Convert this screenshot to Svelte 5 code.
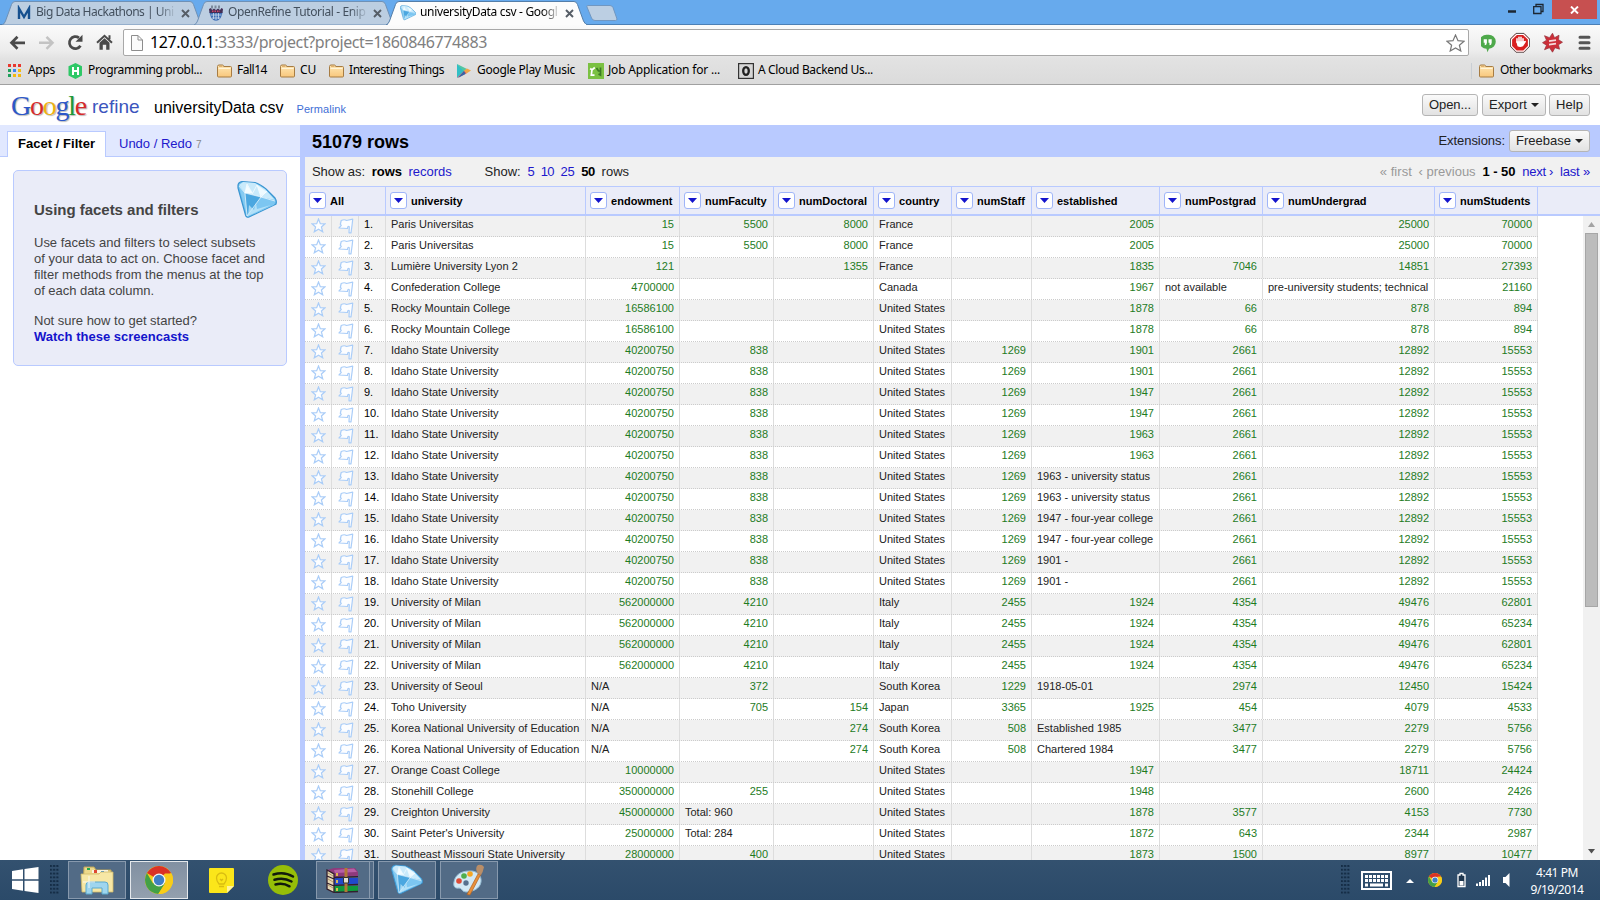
<script>
  // Spreads the letters of a label so that it takes exactly `width` pixels.
  function fit(node, width) {
    const natural = node.getBoundingClientRect().width;
    const count = node.textContent.length;
    if (width && count) node.style.letterSpacing = `${(width - natural) / count}px`;
  }

  const tabs = [
    { title: 'Big Data Hackathons | Uni', icon: 'm', active: false },
    { title: 'OpenRefine Tutorial - Enip', icon: 'crest', active: false },
    { title: 'universityData csv - Googl', icon: 'gem', active: true }
  ];

  const bookmarks = [
    { icon: 'apps', label: 'Apps', w: 27, slot: 60 },
    { icon: 'hr', label: 'Programming probl...', w: 114, slot: 149 },
    { icon: 'folder', label: 'Fall14', w: 30, slot: 63 },
    { icon: 'folder', label: 'CU', w: 16, slot: 49 },
    { icon: 'folder', label: 'Interesting Things', w: 95, slot: 128 },
    { icon: 'play', label: 'Google Play Music', w: 98, slot: 131 },
    { icon: 'job', label: 'Job Application for ...', w: 112, slot: 150 },
    { icon: 'cloud', label: 'A Cloud Backend Us...', w: 115, slot: 150 }
  ];

  const columns = [
    { name: 'All', w: 81, lw: 14 },
    { name: 'university', w: 200, lw: 51.5 },
    { name: 'endowment', w: 94, lw: 61.5 },
    { name: 'numFaculty', w: 94, lw: 61.5 },
    { name: 'numDoctoral', w: 100, lw: 68 },
    { name: 'country', w: 78, lw: 40.5 },
    { name: 'numStaff', w: 80, lw: 48 },
    { name: 'established', w: 128, lw: 60.5 },
    { name: 'numPostgrad', w: 103, lw: 71 },
    { name: 'numUndergrad', w: 172, lw: 78.5 },
    { name: 'numStudents', w: 103, lw: 70.5 }
  ];

  const US = 'United States';
  const idaho = (est) => ['Idaho State University', '40200750', '838', '', US, '1269', est, '2661', '12892', '15553'];
  const milan = (n) => ['University of Milan', '562000000', '4210', '', 'Italy', '2455', '1924', '4354', '49476', n];
  const rows = [
    ['Paris Universitas', '15', '5500', '8000', 'France', '', '2005', '', '25000', '70000'],
    ['Paris Universitas', '15', '5500', '8000', 'France', '', '2005', '', '25000', '70000'],
    ['Lumière University Lyon 2', '121', '', '1355', 'France', '', '1835', '7046', '14851', '27393'],
    ['Confederation College', '4700000', '', '', 'Canada', '', '1967', 'not available', 'pre-university students; technical', '21160'],
    ['Rocky Mountain College', '16586100', '', '', US, '', '1878', '66', '878', '894'],
    ['Rocky Mountain College', '16586100', '', '', US, '', '1878', '66', '878', '894'],
    idaho('1901'),
    idaho('1901'),
    idaho('1947'),
    idaho('1947'),
    idaho('1963'),
    idaho('1963'),
    idaho('1963 - university status'),
    idaho('1963 - university status'),
    idaho('1947 - four-year college'),
    idaho('1947 - four-year college'),
    idaho('1901 -'),
    idaho('1901 -'),
    milan('62801'),
    milan('65234'),
    milan('62801'),
    milan('65234'),
    ['University of Seoul', 'N/A', '372', '', 'South Korea', '1229', '1918-05-01', '2974', '12450', '15424'],
    ['Toho University', 'N/A', '705', '154', 'Japan', '3365', '1925', '454', '4079', '4533'],
    ['Korea National University of Education', 'N/A', '', '274', 'South Korea', '508', 'Established 1985', '3477', '2279', '5756'],
    ['Korea National University of Education', 'N/A', '', '274', 'South Korea', '508', 'Chartered 1984', '3477', '2279', '5756'],
    ['Orange Coast College', '10000000', '', '', US, '', '1947', '', '18711', '24424'],
    ['Stonehill College', '350000000', '255', '', US, '', '1948', '', '2600', '2426'],
    ['Creighton University', '450000000', 'Total: 960', '', US, '', '1878', '3577', '4153', '7730'],
    ["Saint Peter's University", '25000000', 'Total: 284', '', US, '', '1872', '643', '2344', '2987'],
    ['Southeast Missouri State University', '28000000', '400', '', US, '', '1873', '1500', '8977', '10477']
  ];
  const isNumber = (v) => /^\d+$/.test(v);
  const keys = [5, 9, 13, 17, 21, 25];
</script>

{#snippet gem(size)}
  <svg width={size} height={size} viewBox="0 0 40 40">
    <path d="M1 5Q1.500 2 5 1.500L18 2.500Q23 4 29 9L38 18Q40 21 39 24L12 37Q9.500 38 8.500 35L1 8Z" fill="#6fc0ee" stroke="#3a94d0" stroke-width="1.200" />
    <path d="M2 5L6 2L18 3L28 9L38 20L24 17L8 13Z" fill="#c9eafb" />
    <path d="M8 13L10 5L15.500 13.500Z" fill="#f4fcff" />
    <path d="M24 16L20 5L30 12Z" fill="#eefaff" />
    <path d="M2 6L8 13L10 36Z" fill="#86cbf2" />
    <path d="M8 13L24 17L10 36Z" fill="#4ba7e0" />
    <path d="M24 17L38.500 21L37 25L10 37Z" fill="#7cc6f1" />
    <path d="M8 13L10 4L15.500 13.500L20 5L24 17L30 11M2 6L8 13L10 36M8 13L24 17L10 36M24 17L38 21" fill="none" stroke="#fff" stroke-opacity=".75" stroke-width=".9" />
    <path d="M11 36L12 25L17 30L19 23L20 29L34 25Z" fill="#c9ebfb" fill-opacity=".7" />
  </svg>
{/snippet}

{#snippet chrome(size)}
  <svg width={size} height={size} viewBox="0 0 28 28">
    <circle cx="14" cy="14" r="14" fill="#f8cd18" />
    <path d="M14 14L1.900 7A14 14 0 0 1 26.100 7L14 7.500Z" fill="#da3226" />
    <path d="M26.100 7H14V14Z" fill="#da3226" />
    <path d="M1.900 7A14 14 0 0 0 13.300 28L20 17.500L14 14L8 17.500Z" fill="#43a046" />
    <path d="M13.300 28L20 17.500L14 14L20 7.500H26.300A14 14 0 0 1 13.300 28Z" fill="#f8cd18" />
    <circle cx="14" cy="14" r="6.500" fill="#f5f5f5" />
    <circle cx="14" cy="14" r="5.200" fill="#3f7fc5" />
  </svg>
{/snippet}

{#snippet folder()}
  <svg width="16" height="16" viewBox="0 0 16 16">
    <defs><linearGradient id="fold" x1="0" y1="0" x2="0" y2="1"><stop offset="0" stop-color="#fee7b4" /><stop offset="1" stop-color="#f8c77c" /></linearGradient></defs>
    <path d="M.5 13V3.500Q.5 2 2 2H5.500Q6.500 2 6.700 3.500H13.500Q14.500 3.500 14.500 4.500V13Q14.500 14 13.500 14H1.500Q.5 14 .5 13Z" fill="url(#fold)" stroke="#a77c43" />
    <path d="M1.500 5.500H13.500" stroke="#fff4d8" />
    <path d="M2 3.200H5.500" stroke="#d39d56" />
  </svg>
{/snippet}

{#snippet icon(kind)}
  {#if kind === 'folder'}
    {@render folder()}
  {:else if kind === 'apps'}
    <svg width="16" height="16" viewBox="0 0 16 16">
      <path d="M0 1H3V4H0ZM5 1H8V4H5ZM10 1H13V4H10Z" fill="#e8382f" />
      <path d="M0 6H3V9H0Z" fill="#1fa05b" /><path d="M5 6H8V9H5Z" fill="#3d86f0" /><path d="M10 6H13V9H10Z" fill="#f5b910" />
      <path d="M0 11H3V14H0Z" fill="#1fa05b" /><path d="M5 11H8V14H5ZM10 11H13V14H10Z" fill="#f5b910" />
    </svg>
  {:else if kind === 'hr'}
    <svg width="16" height="16" viewBox="0 0 16 16"><path d="M7.500 0L14 3.200V12.500L7.500 16L.5 12.500V3.200Z" fill="#2ec866" /><path d="M5 4V12M10 4V12M5 8H10" stroke="#fff" stroke-width="2" /></svg>
  {:else if kind === 'play'}
    <svg width="16" height="16" viewBox="0 0 16 16"><path d="M0 1L8 7.500L0 15Z" fill="#30bfc5" /><path d="M0 1L10 6L7 8.500Z" fill="#53c6a0" /><path d="M0 15L7 8L10 10Z" fill="#d9485b" /><path d="M7 7.500L10 5.500L14 7.500L9.500 10.500Z" fill="#f0a646" /><path d="M1 15L7 8L8.500 11Z" fill="#3566a8" /></svg>
  {:else if kind === 'job'}
    <svg width="16" height="16" viewBox="0 0 16 16"><rect width="16" height="16" fill="#7bc142" /><path d="M2.200 5.500L4 7L6.800 4.500M4 6.500L3.300 12.200H6.500" fill="none" stroke="#fff" stroke-width="1.700" /><path d="M8.500 5L10.500 8H13M12.500 4.500V12L10.500 11" fill="none" stroke="#3c7a25" stroke-width="1.700" /></svg>
  {:else if kind === 'cloud'}
    <svg width="16" height="16" viewBox="0 0 16 16"><rect x=".6" y=".6" width="14.800" height="14.800" fill="#d7d7d7" stroke="#333" stroke-width="1.200" /><ellipse cx="8" cy="8" rx="2.800" ry="3.900" fill="none" stroke="#222" stroke-width="2.300" /></svg>
  {:else if kind === 'm'}
    <svg width="16" height="16" viewBox="0 0 16 16"><path d="M3 14V3.500L8 12L13 3.500V14" fill="none" stroke="#15508f" stroke-width="2.400" /></svg>
  {:else if kind === 'crest'}
    <svg width="16" height="16" viewBox="0 0 16 16"><path d="M1.500 7H14.500Q14 14.500 8 16Q2 14.500 1.500 7Z" fill="#3e6eb4" /><path d="M2.500 10H13.500M4 13H12M5.500 8V14M8 8V15.500M10.500 8V14" stroke="#c6d8ec" stroke-width=".8" /><path d="M1 4L3 3L4 5L6 3.500L8 5L10 3.500L12 5L13.500 3L15 4L14.500 8H1.500Z" fill="#432f55" /><path d="M4 6.300H12" stroke="#cf4468" stroke-width="1.500" stroke-dasharray="1.500 1" /><path d="M3 2H13" stroke="#7c8a9b" stroke-width="3" stroke-dasharray="2 1.500" /></svg>
  {:else}
    {@render gem(16)}
  {/if}
{/snippet}

{#snippet menuButton()}
  <span class="drop"><svg width="9" height="5" viewBox="0 0 9 5"><path d="M0 0H9L4.500 5Z" fill="#1414cc" /></svg></span>
{/snippet}

<div class="screen">
  <div class="strip">
    <div class="tabs">
      {#each tabs as t}
        <div class="tab" class:active={t.active}>
          <svg class="shape" width="202" height="25" viewBox="0 0 202 25">
            <path d="M0 25Q2.500 24 3.500 21L9.500 4.500Q10.500 1.500 13 1.500H188Q190.500 1.500 191.500 4.500L197.500 21Q199 24.500 202 25Z" fill={t.active ? '#fcfcfc' : '#bccee1'} stroke={t.active ? '#547ea9' : '#6f91b6'} stroke-width="1" />
            {#if t.active}<path d="M2 24.800H200" stroke="#fcfcfc" stroke-width="1.500" />{/if}
          </svg>
          <span class="tabicon">{@render icon(t.icon)}</span>
          <span class="tabtext"><span class="ui" use:fit={137.500}>{t.title}</span></span>
          <svg class="close" width="9" height="9" viewBox="0 0 9 9"><path d="M1 1L8 8M8 1L1 8" stroke="#555d66" stroke-width="1.900" /></svg>
        </div>
      {/each}
      <svg class="newtab" width="33" height="17" viewBox="0 0 33 17"><path d="M2.500 .5H25Q27 .5 28 2.500L32 14Q32 15.500 30.500 15.500H10Q7.500 15.500 6.500 13L2 2Q1.500 .5 2.500 .5Z" fill="#bccfe3" stroke="#7197c1" /></svg>
    </div>
    <div class="winbtns">
      <svg width="40" height="19" viewBox="0 0 40 19"><path d="M0 11.500H8" stroke="#1c2733" stroke-width="2.500" /><path d="M25.700 6.700H33V13.500H25.700ZM28 6.500V4.500H35V11.500H33" fill="none" stroke="#1c2733" stroke-width="1.300" /></svg>
      <div class="winclose"><svg width="9" height="8" viewBox="0 0 9 8"><path d="M1 .5L8 7.500M8 .5L1 7.500" stroke="#fff" stroke-width="1.900" /></svg></div>
    </div>
  </div>

  <div class="chromebar">
    <div class="nav">
      <svg width="114" height="28" viewBox="0 0 114 28">
        <g transform="translate(0 -.7)">
          <path d="M25 14.500H12M17.500 8.500L11.500 14.500L17.500 20.500" fill="none" stroke="#4a4a4a" stroke-width="2.700" />
          <path d="M39 14.500H52M46.500 8.500L52.500 14.500L46.500 20.500" fill="none" stroke="#c3c3c3" stroke-width="2.500" />
          <path d="M80.500 17.500A6 6 0 1 1 79 9.500" fill="none" stroke="#4a4a4a" stroke-width="2.700" />
          <path d="M82.500 6.500V13.500H75.500Z" fill="#4a4a4a" />
          <path d="M97 14.500L104.500 7.500L112 14.500M109.500 7V11" fill="none" stroke="#4a4a4a" stroke-width="2" />
          <path d="M99.500 14.500L104.500 10L109.500 14.500V21.500H106.200V16.500H102.800V21.500H99.500Z" fill="#4a4a4a" />
        </g>
      </svg>
      <div class="omnibox">
        <svg width="12" height="16" viewBox="0 0 12 16"><path d="M.5 .5H7L11.500 5V15.500H.5ZM7 .5V5H11.500" fill="#fbfbfb" stroke="#8d8d8d" /></svg>
        <span class="url" use:fit={337}>127.0.0.1<span class="dim">:3333/project?project=1860846774883</span></span>
        <svg class="star" width="19" height="18" viewBox="0 0 19 18"><path d="M9.500 1L12 6.700L18 7.200L13.400 11.200L14.800 17L9.500 13.900L4.200 17L5.600 11.200L1 7.200L7 6.700Z" fill="#fff" stroke="#777" stroke-width="1.200" /></svg>
      </div>
      <svg width="120" height="28" viewBox="0 0 120 28">
        <g transform="translate(-1.500 -.8)">
          <path d="M7 6.500H9A7 7 0 0 1 9.500 20.500L8 24L7 20.500A7 7 0 0 1 7 6.500Z" fill="#4ea94b" />
          <path d="M4.200 11H7.400V14.500Q7.200 17 5.200 17V14.500H4.200ZM9 11H12.200V14.500Q12 17 10 17V14.500H9Z" fill="#fff" />
          <path d="M36.500 5.200H44.500L50 10.700V18.300L44.500 24H36.500L31 18.300V10.700Z" fill="#d92020" stroke="#555" stroke-width="1" />
          <path d="M37 6.300H44L49 11.200V17.900L44 22.900H37L32 17.900V11.200Z" fill="#d92020" stroke="#fff" stroke-width="1.200" />
          <path d="M37.500 14V10.500M39.500 14V9M41.500 14V9M43.500 14V10.500" stroke="#fff" stroke-width="1.500" stroke-linecap="round" /><path d="M36.700 13H44.300L46 12.500L46.500 13.500L43.500 18Q40.500 19.500 38 18Z" fill="#fff" />
          <path d="M73 5L75 9.500L79.500 7L79 11.500L83 14L79 16.500L80 21L75.500 19.500L73 24L70 19.500L65 21.500L67 17L63 14.500L67 12L65 7.500L70 9.500Z" fill="#cc2e38" stroke="#95323b" stroke-width=".7" />
          <path d="M69.500 13L76.500 12M69.500 16.500L76.500 15.500" stroke="#f5d9db" stroke-width="1.700" />
          <path d="M100.500 9H109.500M100.500 14.500H109.500M100.500 20H109.500" stroke="#555" stroke-width="3" stroke-linecap="round" />
        </g>
      </svg>
    </div>
    <div class="marks">
      {#each bookmarks as b}
        <div class="mark" style:width="{b.slot}px">
          <span class="markicon">{@render icon(b.icon)}</span>
          <span class="ui" use:fit={b.w}>{b.label}</span>
        </div>
      {/each}
      <div class="mark other">{@render folder()}<span class="ui" use:fit={92}>Other bookmarks</span></div>
    </div>
  </div>

  <header>
    <div class="logo"><span class="google" use:fit={75}><i class="b">G</i><i class="r">o</i><i class="y">o</i><i class="b">g</i><i class="g">l</i><i class="r">e</i></span><span class="refine" use:fit={47.500}>refine</span></div>
    <span class="project" use:fit={129.500}>universityData csv</span>
    <span class="perma" use:fit={49.500}>Permalink</span>
    <div class="btns">
      <span class="btn" style:width="56px"><span use:fit={42}>Open...</span></span>
      <span class="btn" style:width="64px"><span use:fit={38}>Export</span><b class="caret"></b></span>
      <span class="btn help" style:width="41px"><span use:fit={27}>Help</span></span>
    </div>
  </header>

  <main>
    <aside>
      <div class="sidetabs">
        <div class="stab on"><span use:fit={77}>Facet / Filter</span></div>
        <div class="stab"><span use:fit={73}>Undo / Redo</span><small>7</small></div>
      </div>
      <section class="hint">
        <div class="gem">{@render gem(40)}</div>
        <h1><span use:fit={164.500}>Using facets and filters</span></h1>
        <p>
          <span use:fit={221.500}>Use facets and filters to select subsets</span><br />
          <span use:fit={231}>of your data to act on. Choose facet and</span><br />
          <span use:fit={229.500}>filter methods from the menus at the top</span><br />
          <span use:fit={120}>of each data column.</span>
        </p>
        <p>
          <span use:fit={163}>Not sure how to get started?</span><br />
          <span class="watch" use:fit={155}>Watch these screencasts</span>
        </p>
      </section>
    </aside>

    <div class="view">
      <div class="summary">
        <h2 use:fit={97}>51079 rows</h2>
        <div class="ext"><span use:fit={66.500}>Extensions:</span><span class="btn" style:width="81px"><span use:fit={55}>Freebase</span><b class="caret"></b></span></div>
      </div>
      <div class="controls">
        <div class="group"><span use:fit={53}>Show as:</span><b use:fit={30}>rows</b><a href="#records" use:fit={43}>records</a></div>
        <div class="group"><span use:fit={36}>Show:</span><a href="#5" use:fit={6.500}>5</a><a href="#10" use:fit={13}>10</a><a href="#25" use:fit={14}>25</a><b use:fit={13.500}>50</b><span use:fit={27.500}>rows</span></div>
        <div class="group pager"><span class="off" use:fit={32}>« first</span><span class="off" use:fit={57}>‹ previous</span><b use:fit={33}>1 - 50</b><a href="#next" use:fit={31}>next ›</a><a href="#last" use:fit={30}>last »</a></div>
      </div>
      <div class="thead">
        {#each columns as c}
          <div class="th" style:width="{c.w}px">{@render menuButton()}<span class="name" use:fit={c.lw}>{c.name}</span></div>
        {/each}
      </div>
      <div class="body">
        <div class="rows">
          {#each rows as row, i}
            <div class="row" class:odd={i % 2 === 0}>
              <div class="td ic"><svg width="15" height="15" viewBox="0 0 15 15"><path d="M7.500 1L9.300 5.600L14 5.800L10.400 9L11.700 13.800L7.500 11.200L3.300 13.800L4.600 9L1 5.800L5.700 5.600Z" fill="#fdfeff" stroke="#aacdf8" stroke-width="1.200" /></svg></div>
              <div class="td ic"><svg width="16" height="16" viewBox="0 0 16 16"><path d="M3.200 2.500Q6.500 1 8.500 2.500L14.700 1.200L14.200 6L13 14.800H11L11.300 8.700Q9.500 7.500 9.500 10.500L1 10L3.300 7.300L2.300 6.500Z" fill="#fcfdff" stroke="#aacdf8" stroke-width="1.200" stroke-linejoin="round" /></svg></div>
              <div class="td idx">{i + 1}.</div>
              {#each row as v, j}
                <div class="td" class:num={isNumber(v)} style:width="{columns[j + 1].w}px">{v}</div>
              {/each}
            </div>
          {/each}
        </div>
        <div class="scroll">
          <svg width="9" height="5" viewBox="0 0 9 5"><path d="M1 5H8L4.500 0Z" fill="#a3a3a3" /></svg>
          <div class="thumb"></div>
          <svg class="down" width="9" height="5" viewBox="0 0 9 5"><path d="M1 0H8L4.500 4.500Z" fill="#505050" /></svg>
        </div>
      </div>
    </div>
  </main>

  <footer>
    <svg class="win" width="27" height="26" viewBox="0 0 27 26"><path d="M0 4L11 2.300V12.300H0ZM12.500 2L26.500 0V12.300H12.500ZM0 13.700H11V23.700L0 22ZM12.500 13.700H26.500V26L12.500 24Z" fill="#fff" /></svg>
    <div class="grip"></div>
    <div class="task explorer">
      <svg width="34" height="32" viewBox="0 0 34 32">
        <path d="M4 3H14L16 6H31V26H3Z" fill="#eed98b" stroke="#bba458" /><path d="M7 4H10V6H7Z" fill="#22a84c" /><path d="M12 6H28V9H12Z" fill="#f9f4df" /><path d="M14 6H17V9H14Z" fill="#df4932" /><path d="M21 7H24V10H21Z" fill="#378fdc" />
        <path d="M1 10H19L21 8H33V28H2Z" fill="#f7e7a5" stroke="#d1ba69" stroke-width=".8" />
        <path d="M6 30V21Q6 18 9 18H25Q28 18 28 21V30H22V24H12V30Z" fill="#9ed5ee" stroke="#5ba9cd" /><path d="M9 12V24M3 18H15" stroke="#fff" stroke-opacity=".8" />
      </svg>
    </div>
    <div class="task current">{@render chrome(28)}</div>
    <svg class="keep" width="25" height="25" viewBox="0 0 25 25"><path d="M1 0H24Q25 0 25 1V18L18 25H1Q0 25 0 24V1Q0 0 1 0Z" fill="#fbe61a" /><path d="M25 18L18 25V18Z" fill="#fff39b" /><path d="M10 16Q7.500 13 7.500 10A5 5 0 0 1 17.500 10Q17.500 13 15 16ZM10 18.500H15M11 11L12.500 12.500L14 11" fill="none" stroke="#d9bd12" stroke-width="1.300" /></svg>
    <svg class="spotify" width="30" height="30" viewBox="0 0 30 30"><circle cx="15" cy="15" r="15" fill="#96be08" /><path d="M5.500 9.500Q16 6 25 11.500M6.500 14.800Q15.500 12 23.500 16.500M7.500 19.500Q15 17.500 21.500 21.300" fill="none" stroke="#111a0c" stroke-width="2.500" stroke-linecap="round" /></svg>
    <div class="task rar">
      <svg width="34" height="26" viewBox="0 0 34 26">
        <path d="M1 3L8 1H29L32 5V9L8 10L1 8Z" fill="#8e3a7c" /><path d="M8 3L28 1.500L31 5L9 6Z" fill="#b65fa5" />
        <path d="M7 11H32V17L8 18Z" fill="#2149cc" /><path d="M7 19H32V24L8 26Z" fill="#109a3c" />
        <path d="M1 3L8 7V25.500L1 22Z" fill="#e6d7b5" />
        <path d="M1 3L8 7V25.500L1 22ZM1 9L8 12M1 16L8 19M8 10.500L32 9.700M8 18.300L32 17.500M8 25.500L32 24.500" fill="none" stroke="#32202e" stroke-width="1.300" />
        <path d="M2 6L7 9M2 12L7 15M2 18L7 21" stroke="#a38a5c" stroke-width=".8" />
        <path d="M18.500 1H21.500V25H18.500Z" fill="#b17a34" /><path d="M17.500 10.500H22.500V16H17.500Z" fill="#e3dfcf" stroke="#333" /><path d="M11 6V9M11 13V16M11 21V24" stroke="#e8c24a" stroke-width="1.800" />
      </svg>
    </div>
    <div class="stack"></div>
    <div class="task">{@render gem(32)}</div>
    <div class="task paint">
      <svg width="34" height="32" viewBox="0 0 34 32">
        <path d="M17 7C25 6 30 12 29 18C28 25 20 28 14 28C10 28 10 24 7 24C3 25 1 22 2 18C3 11 9 7 17 7Z" fill="#d3e9f5" stroke="#96bdd5" /><circle cx="14" cy="19" r="2.700" fill="#57718e" /><circle cx="7" cy="17" r="2.800" fill="#de4b36" /><circle cx="12" cy="12" r="2.800" fill="#4fae4c" /><circle cx="18" cy="10" r="2.800" fill="#f5a623" /><path d="M26 10L15 30.500L18 31L29 10Z" fill="#e8903a" stroke="#b26222" stroke-width=".7" /><path d="M25 9Q23 3 26 1Q30 0 32 3Q31 8 29 11Z" fill="#b98e68" />
      </svg>
    </div>
    <div class="tray">
      <div class="grip"></div>
      <svg class="kb" width="31" height="19" viewBox="0 0 31 19"><rect x="1" y="1" width="29" height="17" fill="none" stroke="#fff" stroke-width="2" />
        {#each keys as x}<path d="M{x - 1} 4H{x + 2}V7H{x - 1}ZM{x - 1} 8H{x + 2}V11H{x - 1}Z" fill="#fff" />{/each}
        <path d="M4 12.500H7V15.500H4ZM9 12.500H22V15.500H9ZM24 12.500H27V15.500H24Z" fill="#fff" /></svg>
      <svg class="up" width="8" height="4" viewBox="0 0 8 4"><path d="M0 4H8L4 0Z" fill="#fff" /></svg>
      <span class="mini">{@render chrome(14)}</span>
      <svg class="status" width="56" height="16" viewBox="0 0 56 16">
        <path d="M3 1.500H6V3H8V14.500H1V3H3Z" fill="#1d354d" stroke="#fff" stroke-width="1.300" /><path d="M2.500 9H6.500V13.500H2.500Z" fill="#fff" />
        <path d="M19 11.500H21V14H19ZM22 10H24V14H22ZM25 8H27V14H25ZM28 5.500H30V14H28ZM31 3H33V14H31Z" fill="#fff" />
        <path d="M46 5H48.500L52.500 1V15L48.500 11H46Z" fill="#fff" />
      </svg>
      <div class="clock"><span use:fit={42}>4:41 PM</span><span use:fit={53}>9/19/2014</span></div>
    </div>
  </footer>
</div>

<style>
  :global(body) { margin: 0; overflow: hidden; }
  .screen { width: 1600px; height: 900px; display: flex; flex-direction: column; overflow: hidden; background: #fff; color: #000; font: 13px/16px "Liberation Sans", Arial, sans-serif; }
  .screen * { box-sizing: border-box; }
  svg { display: block; flex: none; }
  span { white-space: nowrap; }
  a { color: #2118cc; text-decoration: none; }
  .ui { display: inline-block; font: 12px/16px "Noto Sans", "Open Sans", sans-serif; }

  .strip { height: 25px; flex: none; background: #67aaed; border-bottom: 1px solid #4b80b6; display: flex; justify-content: space-between; }
  .tabs { display: flex; padding-left: 2px; height: 25px; }
  .tab { position: relative; z-index: 0; width: 202px; height: 25px; margin-right: -10px; display: flex; align-items: center; padding-left: 14px; color: #43505e; }
  .tab.active { z-index: 1; color: #000; }
  .shape { position: absolute; inset: 0; z-index: -1; }
  .tabicon { width: 20px; }
  .tabtext { width: 138px; overflow: hidden; height: 18px; mask-image: linear-gradient(90deg, #000 122px, rgba(0, 0, 0, .15) 138px); }
  .close { margin-left: 7px; margin-top: 1px; }
  .newtab { margin: 5px 0 0 7px; }
  .winbtns { display: flex; }
  .winbtns > svg { margin-right: 4px; }
  .winclose { width: 45px; height: 19px; background: #c75050; display: flex; align-items: center; justify-content: center; margin-right: 3px; }

  .chromebar { height: 60px; flex: none; background: linear-gradient(#fbfbfb 0, #ececec 26px, #e2e2e2 34px, #dbdbdb); border-bottom: 1px solid #a0a0a0; }
  .nav { height: 32px; padding-top: 4px; display: flex; align-items: flex-start; }
  .nav > svg:first-child { margin-right: 9px; }
  .nav > svg { height: 28px; }
  .omnibox { width: 1346px; height: 27px; background: #fff; border: 1px solid #a8a8a8; border-radius: 2px; display: flex; align-items: center; padding: 0 3px 0 7px; flex: none; }
  .nav > svg:last-child { margin-left: 12px; }
  .url { display: inline-block; margin: -1px 0 0 7px; font: 16px/22px "Noto Sans", "Open Sans", sans-serif; }
  .dim { color: #808080; }
  .star { margin-left: auto; }
  .marks { height: 27px; display: flex; align-items: center; padding-left: 8px; }
  .marks .ui { margin-top: -2px; }
  .mark { display: flex; align-items: center; }
  .markicon { width: 20px; flex: none; }
  .mark.other { width: 129px; margin-left: auto; border-left: 1px solid #c9ced4; padding-left: 7px; gap: 5px; }

  header { height: 40px; flex: none; display: flex; align-items: center; padding: 4px 10px 0 11px; }
  .logo { width: 143px; display: flex; align-items: center; }
  .google { display: inline-block; font: 28px/32px "Liberation Serif", serif; text-shadow: 1px 1px 1px #bbb; margin-top: -3px; }
  .google i { font-style: normal; }
  .b { color: #2d58c8; } .r { color: #d52b2b; } .y { color: #eeb211; } .g { color: #1b9a37; }
  .refine { font-size: 19px; line-height: 22px; color: #3b55bd; margin: -1px 0 0 6px; }
  .project { font-size: 16px; line-height: 20px; margin-top: 1px; }
  .perma { font-size: 11px; color: #3f6fd6; margin: 4px 0 0 13px; }
  .btns { margin: -4px 0 0 auto; display: flex; gap: 4px; }
  .btn { height: 22px; border: 1px solid #b5b5b5; border-radius: 3px; background: linear-gradient(#fafafa, #e2e2e2); display: inline-flex; align-items: center; padding-left: 6px; font-size: 13px; color: #222; }
  .help { margin-left: -1px; }
  .caret { border: 4px solid transparent; border-top-color: #222; border-bottom: 0; margin-left: 4px; }

  main { height: 735px; flex: none; display: flex; overflow: hidden; }
  aside { width: 300px; flex: none; }
  .sidetabs { height: 32px; background: #e1e8ff; border-bottom: 1px solid #b9caff; display: flex; padding: 6px 0 0 7px; }
  .stab { height: 26px; padding: 5px 0 0 13px; color: #2118cc; }
  .stab.on { width: 99px; padding: 4px 0 0 10px; background: #fff; border: 1px solid #b9caff; border-bottom: 0; color: #000; font-weight: bold; }
  small { font-size: 10px; color: #888; margin-left: 4px; }
  .hint { position: relative; margin: 13px 0 0 13px; width: 274px; height: 196px; border: 1px solid #b9caff; border-radius: 5px; background: #eaecf8; padding: 30px 0 0 20px; color: #444; }
  .gem { position: absolute; top: 9px; right: 9px; }
  h1 { font-size: 15px; line-height: 18px; margin: 0 0 16px; }
  p { margin: 0 0 14px; line-height: 16px; }
  p span { display: inline-block; }
  .watch { color: #1414cc; font-weight: bold; }

  .view { width: 1300px; border-left: 5px solid #b9caff; display: flex; flex-direction: column; }
  .summary { height: 32px; flex: none; background: #b9caff; display: flex; justify-content: space-between; padding: 5px 10px 0 7px; }
  h2 { font-size: 18px; line-height: 24px; margin: 0; height: 24px; }
  .ext { display: flex; align-items: center; gap: 4px; height: 22px; color: #222; }
  .controls { height: 29px; flex: none; background: #f1f1f1; display: flex; padding: 7px 10px 0 7px; color: #222; }
  .group { display: flex; gap: 6.800px; margin-right: 33px; }
  .group b { color: #000; white-space: nowrap; }
  .group a { white-space: nowrap; }
  .pager { margin: 0 0 0 auto; }
  .off { color: #999; }
  .thead { height: 30px; flex: none; background: #eaecf8; border-top: 1px solid #b9caff; border-bottom: 2px solid #b9caff; display: flex; }
  .th { display: flex; align-items: center; flex: none; padding: 0 0 0 4px; border-right: 1px solid #b9caff; font-size: 11px; font-weight: bold; line-height: 13px; }
  .name { margin-top: 2px; }
  .drop { width: 17px; height: 17px; border: 1px solid #9fb5f8; border-radius: 3px; background: #fff; display: flex; align-items: center; justify-content: center; margin-right: 4px; flex: none; }
  .body { flex: 1; min-height: 0; display: flex; justify-content: space-between; }
  .rows { height: 100%; overflow: hidden; }
  .row { height: 21px; display: flex; border-bottom: 1px dotted #ccc; }
  .odd { background: #f1f1f1; }
  .td { flex: none; border-right: 1px solid #ddd; padding: 2px 5px 0; font-size: 11px; line-height: 13px; white-space: nowrap; color: #222; }
  .ic { width: 27px; padding: 2px 0 0 5.500px; }
  .idx { width: 27px; color: #000; }
  .num { text-align: right; color: #1e7b1e; }
  .scroll { width: 17px; background: #f1f1f1; display: flex; flex-direction: column; align-items: center; padding: 6px 0 6px; }
  .thumb { width: 13px; height: 374px; background: #bcbcbc; border: 1px solid #a6a6a6; margin-top: 6px; }
  .down { margin-top: auto; }

  footer { height: 40px; flex: none; background: linear-gradient(#33516f, #2b4a69); display: flex; align-items: center; padding-left: 12px; }
  .grip { width: 9px; height: 30px; background-image: radial-gradient(circle at 1px 1px, #142c45 1px, transparent 1.200px); background-size: 3.200px 3.800px; }
  footer > .grip { margin: 0 10px 0 11px; }
  .task { width: 58px; height: 38px; flex: none; border: 1px solid #8799ad; background: #526b86; display: flex; align-items: center; justify-content: center; }
  .explorer { margin: 0 4px 0 -1px; }
  .current { border-color: #e4e8ec; background: linear-gradient(#8190a2, #93a0ae); }
  .keep { margin: 0 34px 0 21px; }
  .rar { width: 54px; margin-left: 18px; }
  .stack { width: 4px; height: 38px; border: 1px solid #8799ad; border-left: 0; background: #526b86; margin: 0 4px 0 0; }
  .paint { margin-left: 4px; }
  .tray { margin-left: auto; width: 259px; display: flex; align-items: center; }
  .kb { margin-left: 11px; }
  .up { margin: 2px 0 0 14px; }
  .mini { margin: 0 0 0 14px; }
  .status { margin-left: 15px; }
  .clock { width: 70px; margin: 1px 0 0 9px; display: flex; flex-direction: column; align-items: center; color: #fff; font: 12px/17px "Noto Sans", "Open Sans", sans-serif; }
</style>
